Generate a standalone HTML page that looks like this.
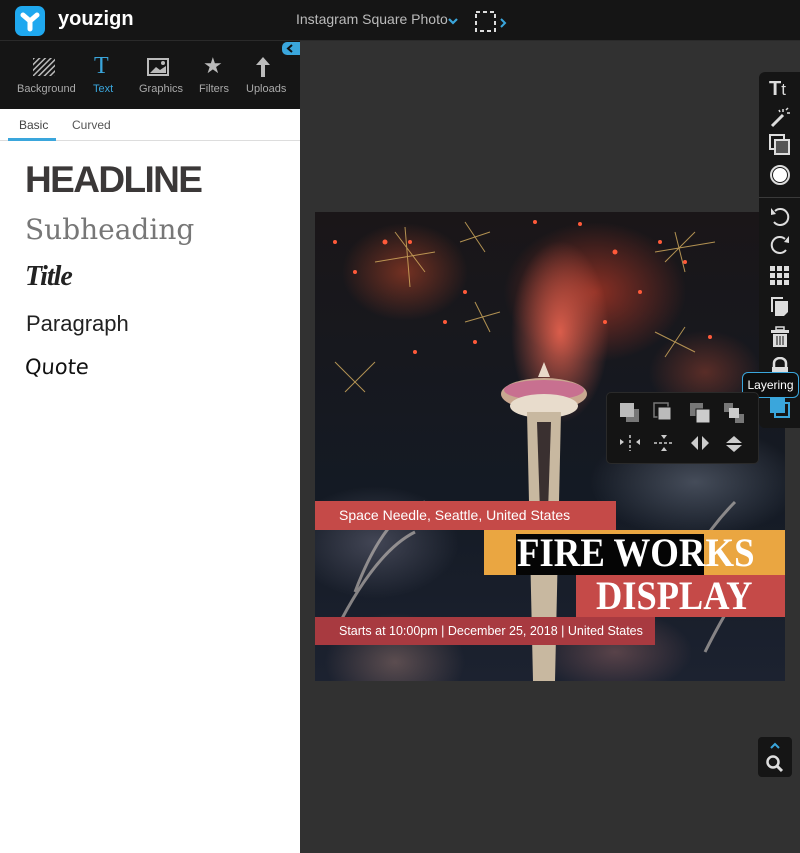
<!DOCTYPE html>
<html><head><meta charset="utf-8"><style>
*{margin:0;padding:0;box-sizing:border-box}
body{width:800px;height:853px;overflow:hidden;background:#313131;font-family:"Liberation Sans","DejaVu Sans",sans-serif;position:relative}
.top{position:absolute;left:0;top:0;width:800px;height:41px;background:#151515;border-bottom:1px solid #2a2a2a}
.logo{position:absolute;left:15px;top:6px;width:30px;height:30px;background:#1fa8ef;border-radius:7px}
.brand{position:absolute;left:58px;top:8px;color:#fff;font-weight:bold;font-size:20px}
.docname{position:absolute;left:296px;top:11px;color:#bbb;font-size:14px}
.side{position:absolute;left:0;top:41px;width:300px;height:812px;background:#fff}
.tabs{position:absolute;left:0;top:0;width:300px;height:68px;background:#151515}
.tab{position:absolute;top:42px;font-size:11px;color:#aaa;text-align:center}
.sub{position:absolute;top:68px;left:0;width:300px;height:32px;border-bottom:1px solid #ddd}
.canvas{position:absolute;left:315px;top:212px;width:470px;height:469px;overflow:hidden;
background:
radial-gradient(ellipse 70px 130px at 245px 120px,rgba(235,100,80,.9),transparent 70%),
radial-gradient(ellipse 130px 100px at 280px 80px,rgba(200,60,40,.65),transparent 70%),
radial-gradient(ellipse 90px 70px at 90px 60px,rgba(190,70,40,.55),transparent 70%),
radial-gradient(ellipse 80px 60px at 390px 160px,rgba(170,70,50,.45),transparent 70%),
radial-gradient(ellipse 110px 60px at 300px 440px,rgba(150,100,100,.5),transparent 70%),
radial-gradient(ellipse 120px 80px at 60px 330px,rgba(120,120,140,.45),transparent 70%),
radial-gradient(ellipse 150px 80px at 380px 270px,rgba(160,170,190,.35),transparent 70%),
radial-gradient(ellipse 100px 70px at 80px 450px,rgba(170,130,120,.45),transparent 70%),
linear-gradient(#1a1618,#141a24 60%,#1c2230)}
.rt{position:absolute;left:759px;width:41px;background:#151515;border-radius:6px 0 0 6px}
.ic{position:absolute;left:10px;width:22px;height:22px}
.big{position:absolute;color:#fff;font-family:'Liberation Serif',serif;font-weight:bold;font-size:40px;transform-origin:left center;white-space:nowrap}
</style></head><body>
<div class="top">
 <div class="logo"><svg width="30" height="30"><path d="M8 9 L15 15 L22 9 M15 15 V23" stroke="#fff" stroke-width="5" fill="none" stroke-linecap="round"/></svg></div>
 <div class="brand">youzign</div>
 <div class="docname">Instagram Square Photo</div>
 <svg style="position:absolute;left:447px;top:16px" width="12" height="10"><path d="M2 3 L6 7 L10 3" stroke="#3aa6dc" stroke-width="2.2" fill="none"/></svg>
 <svg style="position:absolute;left:474px;top:10px" width="36" height="24"><rect x="2" y="2" width="19" height="19" stroke="#ddd" stroke-width="2" stroke-dasharray="4 3" fill="none"/><path d="M27 9 L31 13 L27 17" stroke="#3aa6dc" stroke-width="2" fill="none"/></svg>
</div>
<div class="side">
 <div class="tabs">
  <div style="position:absolute;left:282px;top:1px;width:18px;height:13px;background:#3aa6dc;border-radius:5px 0 0 5px"><svg width="18" height="13"><path d="M10 3 L6 6.5 L10 10" stroke="#111" stroke-width="2" fill="none"/></svg></div>
  <svg style="position:absolute;left:33px;top:17px" width="22" height="18"><defs><pattern id="h" width="4" height="4" patternUnits="userSpaceOnUse" patternTransform="rotate(45)"><rect width="1.5" height="4" fill="#bbb"/></pattern></defs><rect width="22" height="18" fill="url(#h)"/></svg>
  <div style="position:absolute;left:94px;top:12px;font-family:'Liberation Serif',serif;font-size:24px;color:#3aa6dc">T</div>
  <svg style="position:absolute;left:147px;top:17px" width="22" height="18"><rect x="1" y="1" width="20" height="16" fill="none" stroke="#bbb" stroke-width="2"/><path d="M3 15 L9 9 L13 12 L19 8 V15Z" fill="#bbb"/><circle cx="16" cy="5" r="2" fill="#bbb"/></svg>
  <div style="position:absolute;left:203px;top:12px;font-size:22px;color:#bbb">★</div>
  <svg style="position:absolute;left:255px;top:15px" width="16" height="22"><path d="M8 1 L15 9 H10 V21 H6 V9 H1Z" fill="#bbb"/></svg>
  <div class="tab" style="left:17px">Background</div>
  <div class="tab" style="left:93px;color:#3aa6dc">Text</div>
  <div class="tab" style="left:139px">Graphics</div>
  <div class="tab" style="left:199px">Filters</div>
  <div class="tab" style="left:246px">Uploads</div>
 </div>
 <div class="sub">
  <div style="position:absolute;left:19px;top:9px;font-size:12px;color:#444">Basic</div>
  <div style="position:absolute;left:72px;top:9px;font-size:12px;color:#555">Curved</div>
  <div style="position:absolute;left:8px;top:29px;width:48px;height:3px;background:#3aa6dc"></div>
 </div>
 <div style="position:absolute;left:25px;top:118px;font-size:37px;font-weight:bold;color:#3b3838;letter-spacing:-1.6px">HEADLINE</div>
 <div style="position:absolute;left:25px;top:172px;font-family:'DejaVu Serif',serif;font-size:28px;color:#777">Subheading</div>
 <div style="position:absolute;left:25px;top:220px;font-family:'Liberation Serif',serif;font-style:italic;font-weight:bold;font-size:28px;color:#222;letter-spacing:-1px">Title</div>
 <div style="position:absolute;left:26px;top:270px;font-size:22px;color:#222">Paragraph</div>
 <div style="position:absolute;left:25px;top:314px;font-family:'DejaVu Sans',sans-serif;font-size:21px;color:#111;transform:skewX(-4deg)">Quote</div>
</div>
<div class="canvas">
 <svg width="470" height="469" style="position:absolute;left:0;top:0">
  <g fill="#ff5a3a"><circle cx="20" cy="30" r="2"/><circle cx="70" cy="30" r="2.5"/><circle cx="95" cy="30" r="2"/><circle cx="150" cy="80" r="2"/><circle cx="300" cy="40" r="2.5"/><circle cx="345" cy="30" r="2"/><circle cx="325" cy="80" r="2"/><circle cx="395" cy="125" r="2"/><circle cx="130" cy="110" r="2"/><circle cx="220" cy="10" r="2"/><circle cx="265" cy="12" r="2"/><circle cx="100" cy="140" r="2"/><circle cx="160" cy="130" r="2"/><circle cx="370" cy="50" r="2"/><circle cx="290" cy="110" r="2"/><circle cx="40" cy="60" r="2"/></g>
  <g stroke="#d8b060" stroke-width="1" opacity=".8"><path d="M80 20 L110 60 M60 50 L120 40 M90 15 L95 75 M150 10 L170 40 M145 30 L175 20 M360 20 L370 60 M340 40 L400 30 M380 20 L350 50 M160 90 L175 120 M150 110 L185 100 M20 150 L50 180 M30 180 L60 150 M340 120 L380 140 M350 145 L370 115"/></g>
  <g stroke="#cfc6c0" stroke-width="3" opacity=".6" fill="none"><path d="M40 380 Q70 300 110 290 M20 420 Q60 340 100 320 M350 400 Q380 330 420 290 M390 440 Q430 360 460 340"/></g>
  <path d="M229 150 L235 165 L223 165Z" fill="#e8d8c8"/>
  <ellipse cx="229" cy="182" rx="43" ry="16" fill="#c9a890"/>
  <ellipse cx="229" cy="178" rx="40" ry="10" fill="#c87090"/>
  <ellipse cx="229" cy="194" rx="34" ry="12" fill="#e8dccc"/>
  <path d="M212 200 L218 469 H240 L246 200Z" fill="#c8b8a0"/>
  <path d="M222 210 L226 330 H232 L236 210Z" fill="#3a3030"/>
 </svg>
 <div style="position:absolute;left:0;top:289px;width:301px;height:29px;background:#c54a48;color:#fff;font-size:14px;line-height:29px;padding-left:24px">Space Needle, Seattle, United States</div>
 <div style="position:absolute;left:169px;top:318px;width:301px;height:45px;background:#eaa641"></div>
 <div style="position:absolute;left:201px;top:322px;width:188px;height:41px;background:#050505"></div>
 <div class="big" style="left:202px;top:318px;line-height:46px;transform:scaleX(.92)">FIRE WORKS</div>
 <div style="position:absolute;left:261px;top:363px;width:209px;height:42px;background:#c54a48"></div>
 <div class="big" style="left:281px;top:363px;line-height:42px;transform:scaleX(.91)">DISPLAY</div>
 <div style="position:absolute;left:0;top:405px;width:340px;height:28px;background:#a83a40;color:#fff;font-size:12.5px;line-height:28px;padding-left:24px">Starts at 10:00pm | December 25, 2018 | United States</div>
</div>
<div class="rt" style="top:72px;height:356px">
 <div style="position:absolute;left:10px;top:6px;color:#ddd;font-weight:bold;font-size:20px">T<span style="font-weight:normal;font-size:17px">t</span></div>
 <svg class="ic" style="top:35px" viewBox="0 0 22 22"><path d="M3 19 L14 8" stroke="#ddd" stroke-width="3"/><path d="M14 2 V5 M18 6 H21 M17 3 L19 1 M10 3 L11 5" stroke="#ddd" stroke-width="1.5"/></svg>
 <svg class="ic" style="top:62px" viewBox="0 0 22 22"><rect x="1" y="1" width="14" height="14" fill="none" stroke="#ddd" stroke-width="2"/><rect x="6" y="6" width="14" height="14" fill="#555" stroke="#ddd" stroke-width="2"/></svg>
 <svg class="ic" style="top:92px" viewBox="0 0 22 22"><circle cx="11" cy="11" r="9" fill="#fff" stroke="#ddd" stroke-width="2"/><circle cx="11" cy="11" r="7.5" fill="#fff" stroke="#151515" stroke-width="1"/></svg>
 <div style="position:absolute;left:0;top:125px;width:41px;height:1px;background:#3a3a3a"></div>
 <svg class="ic" style="top:134px" viewBox="0 0 22 22"><path d="M6 5 A8 8 0 1 1 5 16" fill="none" stroke="#ddd" stroke-width="2"/><path d="M2 2 L7 8 L2 9Z" fill="#ddd"/></svg>
 <svg class="ic" style="top:162px" viewBox="0 0 22 22"><path d="M16 5 A8 8 0 1 0 17 16" fill="none" stroke="#ddd" stroke-width="2"/><path d="M20 2 L15 8 L20 9Z" fill="#ddd"/></svg>
 <svg class="ic" style="top:193px" viewBox="0 0 22 22"><g fill="#ddd"><rect x="1" y="1" width="5" height="5"/><rect x="8" y="1" width="5" height="5"/><rect x="15" y="1" width="5" height="5"/><rect x="1" y="8" width="5" height="5"/><rect x="8" y="8" width="5" height="5"/><rect x="15" y="8" width="5" height="5"/><rect x="1" y="15" width="5" height="5"/><rect x="8" y="15" width="5" height="5"/><rect x="15" y="15" width="5" height="5"/></g></svg>
 <svg class="ic" style="top:223px" viewBox="0 0 22 22"><path d="M2 2 H14 V4 H4 V17 H2Z" fill="#ddd"/><path d="M6 6 H19 V17 L15 21 H6Z" fill="#ddd"/></svg>
 <svg class="ic" style="top:254px" viewBox="0 0 22 22"><rect x="7" y="1" width="8" height="3" fill="none" stroke="#ddd" stroke-width="1.5"/><rect x="2" y="4" width="18" height="3" fill="#ddd"/><path d="M4 8 H18 V21 H4Z" fill="#ddd"/><path d="M8 10 V19 M11 10 V19 M14 10 V19" stroke="#555" stroke-width="1.5"/></svg>
 <svg class="ic" style="top:285px" viewBox="0 0 22 22"><path d="M5 10 V6 A6 5 0 0 1 17 6 V10" fill="none" stroke="#ddd" stroke-width="2.5"/><rect x="3" y="10" width="16" height="12" fill="#ddd"/></svg>
 <svg class="ic" style="top:325px" viewBox="0 0 22 22"><rect x="6" y="6" width="14" height="14" fill="none" stroke="#3aa6dc" stroke-width="2"/><rect x="1" y="1" width="15" height="15" fill="#3aa6dc"/></svg>
</div>
<div style="position:absolute;left:742px;top:372px;width:57px;height:26px;background:#0e0e0e;border:1px solid #3aa6dc;border-radius:6px;color:#fff;font-size:12px;line-height:24px;text-align:center">Layering</div>
<div style="position:absolute;left:606px;top:392px;width:153px;height:72px;background:#141414;border-radius:5px;border:1px solid #2a2a2a">
 <svg width="153" height="72">
  <g transform="translate(13,10)"><rect x="6" y="6" width="13" height="13" fill="#777"/><rect x="0" y="0" width="14" height="14" fill="#bbb"/></g>
  <g transform="translate(47,10)"><rect x="0" y="0" width="14" height="14" fill="none" stroke="#777" stroke-width="1.5"/><rect x="4" y="4" width="13" height="13" fill="#bbb" stroke="#141414" stroke-width="1"/></g>
  <g transform="translate(83,10)"><rect x="0" y="0" width="13" height="13" fill="#777"/><rect x="6" y="6" width="14" height="14" fill="#ccc" stroke="#141414" stroke-width="1"/></g>
  <g transform="translate(117,10)"><rect x="0" y="0" width="9" height="9" fill="#777"/><rect x="11" y="11" width="9" height="9" fill="#777"/><rect x="5" y="5" width="10" height="10" fill="#ccc"/></g>
  <g fill="#ccc" transform="translate(13,42)"><path d="M0 4 L4 7 L0 10Z M20 4 L16 7 L20 10Z"/><path d="M10 0 V16" stroke="#ccc" stroke-width="1.5" stroke-dasharray="3 2"/></g>
  <g fill="#ccc" transform="translate(47,42)"><path d="M7 0 H13 L10 4Z M7 16 H13 L10 12Z"/><path d="M0 8 H20" stroke="#ccc" stroke-width="1.5" stroke-dasharray="3 2"/></g>
  <g fill="#ccc" transform="translate(83,42)"><path d="M8 1 V15 L1 8Z M12 1 V15 L19 8Z"/></g>
  <g fill="#ccc" transform="translate(117,42)"><path d="M2 8 H18 L10 1Z M2 10 H18 L10 17Z"/></g>
 </svg>
</div>
<div style="position:absolute;left:758px;top:737px;width:34px;height:40px;background:#151515;border-radius:4px">
 <svg width="34" height="40"><path d="M13 11 L17 7 L21 11" stroke="#3aa6dc" stroke-width="2" fill="none"/><circle cx="15" cy="25" r="5.5" fill="none" stroke="#ddd" stroke-width="2.5"/><path d="M19 29 L24 34" stroke="#ddd" stroke-width="3"/></svg>
</div>
</body></html>
